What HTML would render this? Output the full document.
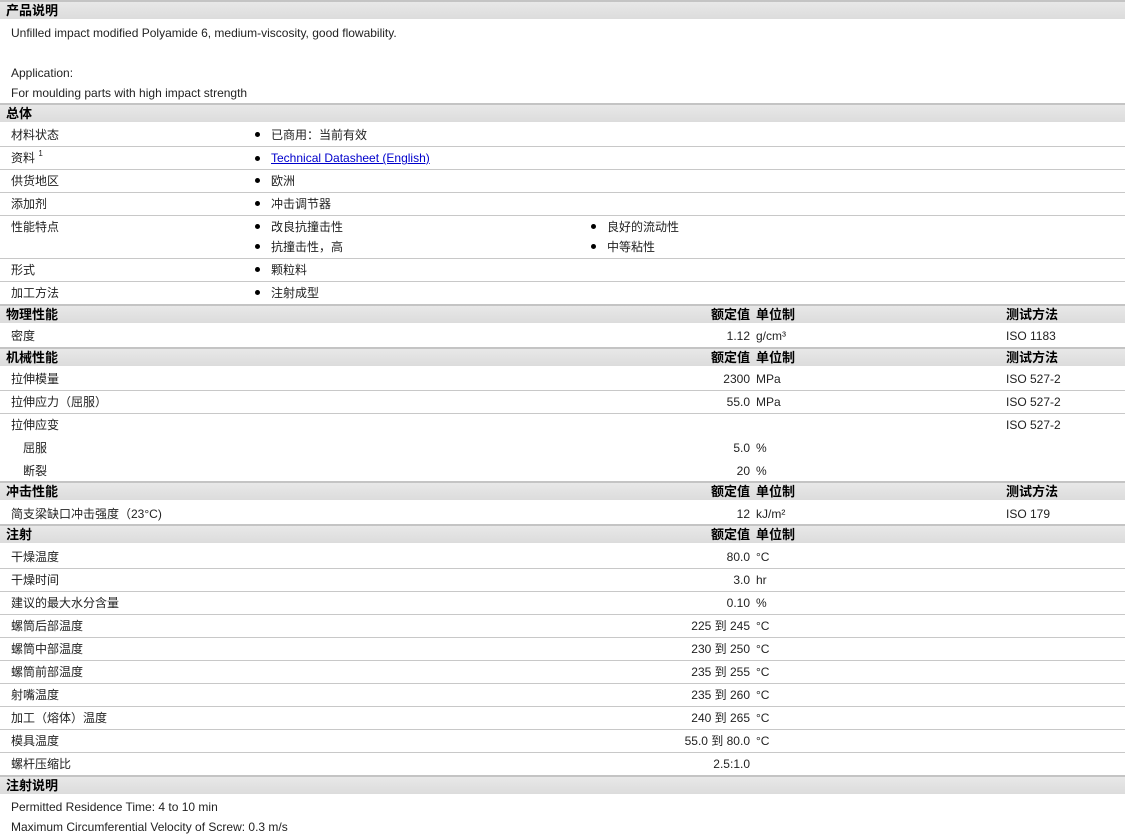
<!DOCTYPE html>
<html><head><meta charset="utf-8"><style>
body{margin:0;width:1125px;height:837px;overflow:hidden;background:#fff;font-family:"Liberation Sans","Noto Sans CJK SC",sans-serif;font-size:12px;color:#222;position:relative}
.h{position:absolute;left:0;width:1125px;height:19px;background:linear-gradient(#e8e8e8,#dcdcdc);border-top:2px solid #c4c4c4;box-sizing:border-box}
.h b{position:absolute;top:1px;font-size:13px;color:#000;line-height:16px}
.l{position:absolute;left:0;width:1125px;height:1px;background:#c8c8c8}
.t{position:absolute;line-height:14px;white-space:nowrap}
.v{position:absolute;right:375px;line-height:14px;white-space:nowrap}
.d{position:absolute;width:5px;height:5px;border-radius:50%;background:#000}
a{color:#00c;text-decoration:underline}
sup{font-size:8px;line-height:0;vertical-align:6px}
</style></head><body>

<div class="h" style="top:0"><b style="left:6px">产品说明</b></div>
<div class="t" style="left:11px;top:26px">Unfilled impact modified Polyamide 6, medium-viscosity, good flowability.</div>
<div class="t" style="left:11px;top:66px">Application:</div>
<div class="t" style="left:11px;top:86px">For moulding parts with high impact strength</div>

<div class="h" style="top:103px"><b style="left:6px">总体</b></div>
<div class="t" style="left:11px;top:128px">材料状态</div><div class="d" style="left:255px;top:132px"></div><div class="t" style="left:271px;top:128px">已商用：当前有效</div>
<div class="l" style="top:146px"></div>
<div class="t" style="left:11px;top:151px">资料 <sup>1</sup></div><div class="d" style="left:255px;top:156px"></div><div class="t" style="left:271px;top:151px"><a>Technical Datasheet (English)</a></div>
<div class="l" style="top:169px"></div>
<div class="t" style="left:11px;top:174px">供货地区</div><div class="d" style="left:255px;top:178px"></div><div class="t" style="left:271px;top:174px">欧洲</div>
<div class="l" style="top:192px"></div>
<div class="t" style="left:11px;top:197px">添加剂</div><div class="d" style="left:255px;top:201px"></div><div class="t" style="left:271px;top:197px">冲击调节器</div>
<div class="l" style="top:215px"></div>
<div class="t" style="left:11px;top:220px">性能特点</div>
<div class="d" style="left:255px;top:224px"></div><div class="t" style="left:271px;top:220px">改良抗撞击性</div>
<div class="d" style="left:591px;top:224px"></div><div class="t" style="left:607px;top:220px">良好的流动性</div>
<div class="d" style="left:255px;top:244px"></div><div class="t" style="left:271px;top:240px">抗撞击性，高</div>
<div class="d" style="left:591px;top:244px"></div><div class="t" style="left:607px;top:240px">中等粘性</div>
<div class="l" style="top:258px"></div>
<div class="t" style="left:11px;top:263px">形式</div><div class="d" style="left:255px;top:267px"></div><div class="t" style="left:271px;top:263px">颗粒料</div>
<div class="l" style="top:281px"></div>
<div class="t" style="left:11px;top:286px">加工方法</div><div class="d" style="left:255px;top:290px"></div><div class="t" style="left:271px;top:286px">注射成型</div>

<div class="h" style="top:304px"><b style="left:6px">物理性能</b><b style="right:375px">额定值</b><b style="left:756px">单位制</b><b style="left:1006px">测试方法</b></div>
<div class="t" style="left:11px;top:329px">密度</div><div class="v" style="top:329px">1.12</div><div class="t" style="left:756px;top:329px">g/cm³</div><div class="t" style="left:1006px;top:329px">ISO 1183</div>

<div class="h" style="top:347px"><b style="left:6px">机械性能</b><b style="right:375px">额定值</b><b style="left:756px">单位制</b><b style="left:1006px">测试方法</b></div>
<div class="t" style="left:11px;top:372px">拉伸模量</div><div class="v" style="top:372px">2300</div><div class="t" style="left:756px;top:372px">MPa</div><div class="t" style="left:1006px;top:372px">ISO 527-2</div>
<div class="l" style="top:390px"></div>
<div class="t" style="left:11px;top:395px">拉伸应力（屈服）</div><div class="v" style="top:395px">55.0</div><div class="t" style="left:756px;top:395px">MPa</div><div class="t" style="left:1006px;top:395px">ISO 527-2</div>
<div class="l" style="top:413px"></div>
<div class="t" style="left:11px;top:418px">拉伸应变</div><div class="t" style="left:1006px;top:418px">ISO 527-2</div>
<div class="t" style="left:23px;top:441px">屈服</div><div class="v" style="top:441px">5.0</div><div class="t" style="left:756px;top:441px">%</div>
<div class="t" style="left:23px;top:464px">断裂</div><div class="v" style="top:464px">20</div><div class="t" style="left:756px;top:464px">%</div>

<div class="h" style="top:481px"><b style="left:6px">冲击性能</b><b style="right:375px">额定值</b><b style="left:756px">单位制</b><b style="left:1006px">测试方法</b></div>
<div class="t" style="left:11px;top:507px">简支梁缺口冲击强度（23°C)</div><div class="v" style="top:507px">12</div><div class="t" style="left:756px;top:507px">kJ/m²</div><div class="t" style="left:1006px;top:507px">ISO 179</div>

<div class="h" style="top:524px"><b style="left:6px">注射</b><b style="right:375px">额定值</b><b style="left:756px">单位制</b></div>
<div class="t" style="left:11px;top:550px">干燥温度</div><div class="v" style="top:550px">80.0</div><div class="t" style="left:756px;top:550px">°C</div>
<div class="l" style="top:568px"></div>
<div class="t" style="left:11px;top:573px">干燥时间</div><div class="v" style="top:573px">3.0</div><div class="t" style="left:756px;top:573px">hr</div>
<div class="l" style="top:591px"></div>
<div class="t" style="left:11px;top:596px">建议的最大水分含量</div><div class="v" style="top:596px">0.10</div><div class="t" style="left:756px;top:596px">%</div>
<div class="l" style="top:614px"></div>
<div class="t" style="left:11px;top:619px">螺筒后部温度</div><div class="v" style="top:619px">225 到 245</div><div class="t" style="left:756px;top:619px">°C</div>
<div class="l" style="top:637px"></div>
<div class="t" style="left:11px;top:642px">螺筒中部温度</div><div class="v" style="top:642px">230 到 250</div><div class="t" style="left:756px;top:642px">°C</div>
<div class="l" style="top:660px"></div>
<div class="t" style="left:11px;top:665px">螺筒前部温度</div><div class="v" style="top:665px">235 到 255</div><div class="t" style="left:756px;top:665px">°C</div>
<div class="l" style="top:683px"></div>
<div class="t" style="left:11px;top:688px">射嘴温度</div><div class="v" style="top:688px">235 到 260</div><div class="t" style="left:756px;top:688px">°C</div>
<div class="l" style="top:706px"></div>
<div class="t" style="left:11px;top:711px">加工（熔体）温度</div><div class="v" style="top:711px">240 到 265</div><div class="t" style="left:756px;top:711px">°C</div>
<div class="l" style="top:729px"></div>
<div class="t" style="left:11px;top:734px">模具温度</div><div class="v" style="top:734px">55.0 到 80.0</div><div class="t" style="left:756px;top:734px">°C</div>
<div class="l" style="top:752px"></div>
<div class="t" style="left:11px;top:757px">螺杆压缩比</div><div class="v" style="top:757px">2.5:1.0</div>

<div class="h" style="top:775px"><b style="left:6px">注射说明</b></div>
<div class="t" style="left:11px;top:800px">Permitted Residence Time: 4 to 10 min</div>
<div class="t" style="left:11px;top:820px">Maximum Circumferential Velocity of Screw: 0.3 m/s</div>
</body></html>
